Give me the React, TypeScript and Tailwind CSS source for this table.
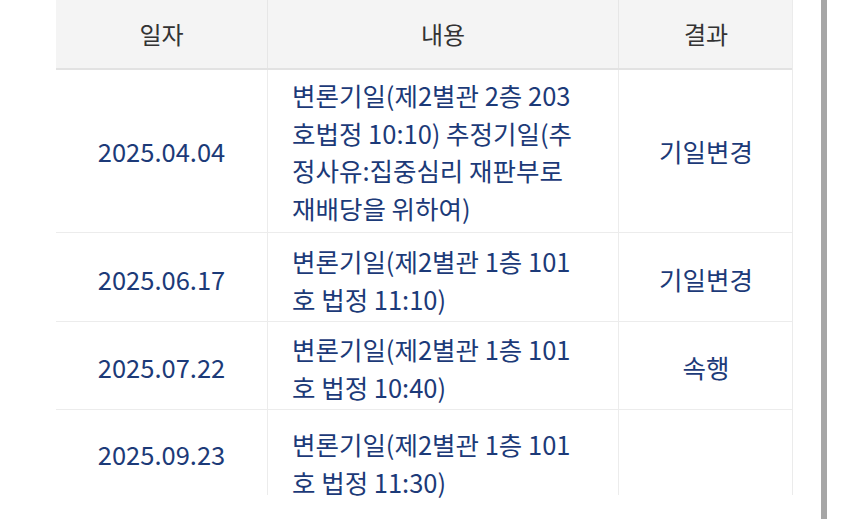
const rows = [
  {
    date: '2025.04.04',
    lines: ['변론기일(제2별관 2층 203', '호법정 10:10) 추정기일(추', '정사유:집중심리 재판부로', '재배당을 위하여)'],
    result: '기일변경',
    h: 'h-[162px] grid-rows-[100%]',
    pad: 'pt-0',
  },
  {
    date: '2025.06.17',
    lines: ['변론기일(제2별관 1층 101', '호 법정 11:10)'],
    result: '기일변경',
    h: 'h-[89px] grid-rows-[100%]',
    pad: 'pt-[5px]',
  },
  {
    date: '2025.07.22',
    lines: ['변론기일(제2별관 1층 101', '호 법정 10:40)'],
    result: '속행',
    h: 'h-[88px] grid-rows-[100%]',
    pad: 'pt-[4px]',
  },
  {
    date: '2025.09.23',
    lines: ['변론기일(제2별관 1층 101', '호 법정 11:30)'],
    result: '',
    h: 'h-[86px] grid-rows-[85px]',
    pad: 'pt-[4px]',
  },
];

export default function App() {
  return (
    <div
      className="flex h-[519px] w-[850px] overflow-hidden bg-white pl-[56px]"
      style={{ fontFamily: '"Noto Sans CJK KR", "Noto Sans", sans-serif' }}
    >
      {/* table */}
      <div className="h-[495px] w-[737px] shrink-0 border-r border-[#ebebeb]">
        <div className="grid h-[70px] grid-cols-[211px_351px_175px] border-b-2 border-[#e2e2e2] bg-[#f4f4f4] text-[24px] text-[#333333]">
          <div className="flex items-center justify-center">일자</div>
          <div className="flex items-center justify-center border-l border-[#e6e6e6]">내용</div>
          <div className="flex items-center justify-center border-l border-[#e6e6e6]">결과</div>
        </div>
        {rows.map((r, i) => (
          <div
            key={r.date}
            className={`grid grid-cols-[211px_351px_175px] text-[25.5px] text-[#1c3a78] ${r.h} ${
              i > 0 ? 'border-t border-[#ececec]' : ''
            }`}
          >
            <div className={`flex items-center justify-center ${r.pad}`}>{r.date}</div>
            <div
              className={`flex min-h-0 flex-col border-l border-[#ececec] pl-[24px] leading-[37.5px] ${
                i === 3 ? 'justify-start pt-[15px]' : `justify-center ${r.pad}`
              }`}
            >
              {r.lines.map((l) => (
                <div key={l} className="shrink-0 whitespace-nowrap">
                  {l}
                </div>
              ))}
            </div>
            <div className={`flex items-center justify-center border-l border-[#ececec] ${r.pad}`}>{r.result}</div>
          </div>
        ))}
      </div>
      {/* scrollbar */}
      <div className="ml-[28px] h-full w-[6px] shrink-0 bg-[#a6a6a6]" />
    </div>
  );
}
